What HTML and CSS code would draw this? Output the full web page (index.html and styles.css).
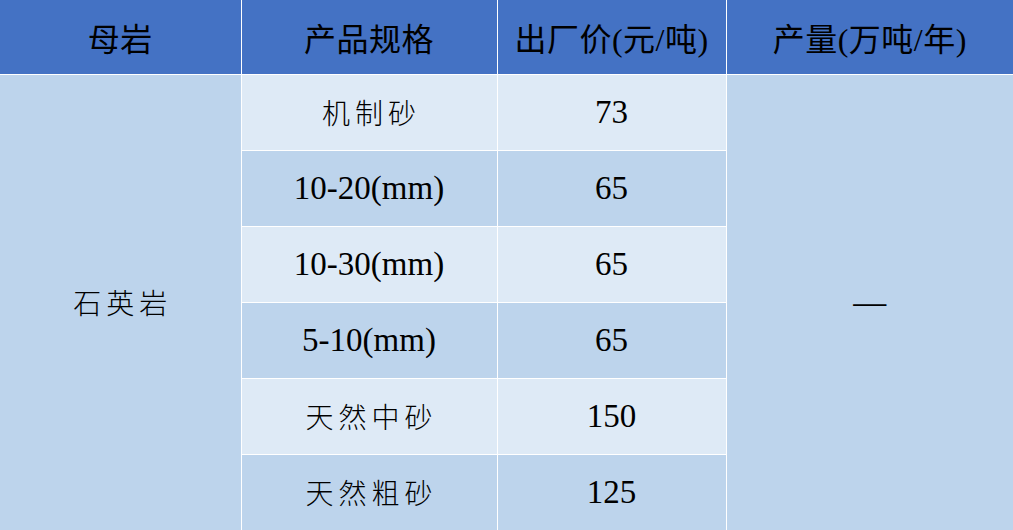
FILE: index.html
```html
<!DOCTYPE html>
<html lang="zh-CN">
<head>
<meta charset="utf-8">
<title>石英岩价格</title>
<link rel="stylesheet" href="styles.css">
</head>
<body>
<table class="price-table">
  <colgroup>
    <col class="c1"><col class="c2"><col class="c3"><col class="c4">
  </colgroup>
  <thead>
    <tr class="head">
      <th>母岩</th>
      <th>产品规格</th>
      <th>出厂价(元/吨)</th>
      <th>产量(万吨/年)</th>
    </tr>
  </thead>
  <tbody>
    <tr class="light">
      <td rowspan="6" class="merged"><span class="cjk">石英岩</span></td>
      <td><span class="cjk">机制砂</span></td>
      <td>73</td>
      <td rowspan="6" class="merged">—</td>
    </tr>
    <tr class="dark">
      <td>10-20(mm)</td>
      <td>65</td>
    </tr>
    <tr class="light">
      <td>10-30(mm)</td>
      <td>65</td>
    </tr>
    <tr class="dark">
      <td>5-10(mm)</td>
      <td>65</td>
    </tr>
    <tr class="light">
      <td><span class="cjk">天然中砂</span></td>
      <td>150</td>
    </tr>
    <tr class="dark">
      <td><span class="cjk">天然粗砂</span></td>
      <td>125</td>
    </tr>
  </tbody>
</table>
</body>
</html>
```
FILE: styles.css
```css
html, body {
  margin: 0;
  padding: 0;
  background: #ffffff;
}

.price-table {
  width: 1013px;
  border-collapse: collapse;
  border-style: hidden;
  table-layout: fixed;
  font-family: "Liberation Serif", "Noto Sans CJK SC", serif;
  color: #000;
}

.c1 { width: 241px; }
.c2 { width: 256px; }
.c3 { width: 229px; }
.c4 { width: 287px; }

.price-table th,
.price-table td {
  border: 1.5px solid #ffffff;
  padding: 0;
  text-align: center;
  vertical-align: middle;
}

.head {
  height: 74px;
  background: #4472c4;
}

.head th {
  font-weight: normal;
  font-size: 32px;
  letter-spacing: 0.5px;
}

tbody tr {
  height: 76px;
}

tbody td {
  font-size: 33px;
}

.light td { background: #deeaf6; }
.dark td { background: #bdd4ec; }
.light td.merged { background: #bdd4ec; }

.cjk {
  font-family: "Noto Sans CJK SC", sans-serif;
  font-weight: 300;
  font-size: 28px;
  letter-spacing: 5px;
  margin-right: -5px;
}
```
